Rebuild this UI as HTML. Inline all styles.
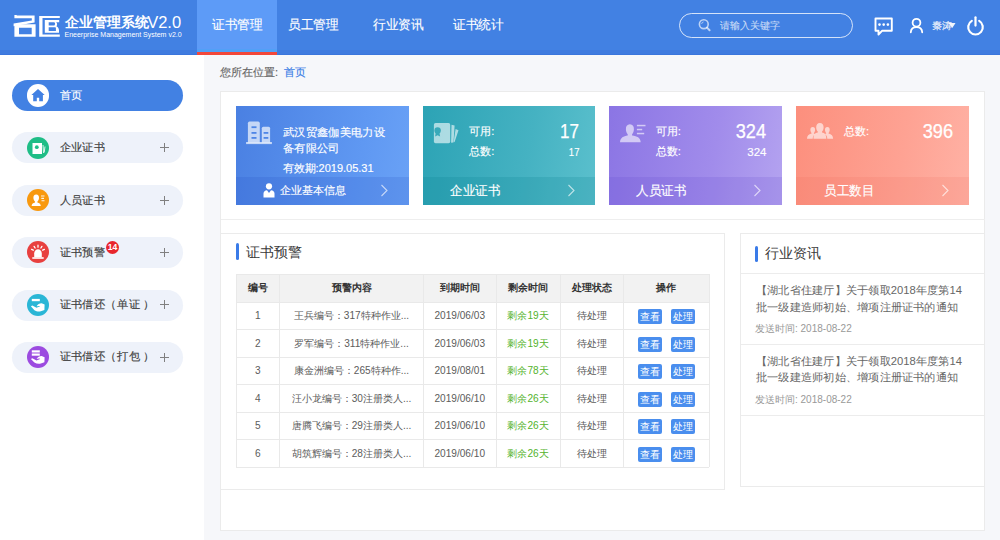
<!DOCTYPE html>
<html><head><meta charset="utf-8"><style>
*{margin:0;padding:0;box-sizing:border-box}
html,body{width:1000px;height:540px;overflow:hidden;background:#f6f7fa;font-family:"Liberation Sans",sans-serif;color:#333}
.sw{-webkit-text-stroke-width:0.15px}
.t{position:absolute;white-space:nowrap;line-height:1}
.r{position:absolute}
svg{position:absolute;overflow:visible}
.pill{position:absolute;left:12px;width:171px;height:31px;border-radius:16px;background:#eef2fa}
.pill .ic{position:absolute;border-radius:50%}
.pill .tx{position:absolute;left:48px;top:9px;font-size:11px;line-height:13px;color:#3d3d3d;white-space:nowrap;transform:scaleX(1.02);transform-origin:0 0}
.pill .pl{position:absolute;left:148px;top:10.6px;width:9px;height:9px}
.pill .pl:before{content:"";position:absolute;left:0;top:4px;width:9px;height:1px;background:#808080}
.pill .pl:after{content:"";position:absolute;left:4px;top:0;width:1px;height:9px;background:#808080}
.card{position:absolute;top:106px;width:172.5px;height:98.5px;overflow:hidden;color:#fff}
.card .bot{position:absolute;left:0;bottom:0;width:100%;height:27.5px}
.c{position:absolute;text-align:center;white-space:nowrap;font-size:10.1px;color:#5c5c5c}
.btn{position:absolute;width:24px;height:15.4px;line-height:15.4px;text-align:center;font-size:10px;color:#fff;background:#4a8eee;border-radius:2px}
.news{position:absolute;white-space:nowrap;font-size:11px;line-height:16.8px;color:#666;transform:scaleX(1.021);transform-origin:0 0}
</style></head><body>
<div class="r" style="left:0px;top:0px;width:1000px;height:55px;background:#4281e3;"></div>
<div class="r" style="left:0px;top:50px;width:1000px;height:5px;background:#3f7bdf;"></div>
<div class="r" style="left:0px;top:54.3px;width:1000px;height:0.7px;background:#3a75dc;"></div>
<div class="r" style="left:197px;top:0px;width:80px;height:49px;background:#5d9bf7;"></div>
<div class="r" style="left:197px;top:49px;width:80px;height:3px;background:#52a0f6;"></div>
<div class="r" style="left:197px;top:52px;width:80px;height:3px;background:#f2473a;"></div>
<svg style="left:0;top:0" width="70" height="50" viewBox="0 0 70 50"><g fill="#fff">
<path d="M14.4 15 L16.6 15 L16.8 15.6 L34.6 15.6 L34.6 22.6 L13.6 26.2 L13.6 23.6 L31.8 20.5 L31.8 18.2 L14.4 18.2 Z"/>
<path fill-rule="evenodd" d="M14.4 24.2 L35.6 24.2 L35.6 36.8 L14.4 36.8 Z M19 27.8 L31.7 27.8 L31.7 34.2 L19 34.2 Z"/>
<path d="M39.2 16.1 H59.8 V18.1 H42.5 V34.4 H59.8 V36.7 H39.2 Z"/>
<path fill-rule="evenodd" d="M44.8 20 H59.2 V22.2 H56.2 C57.5 23.5 57.3 25.2 56.4 26.2 C58.2 27 59 28.5 59 30.5 V32.8 H44.8 Z M48.7 22.2 V25.5 H54 C55.2 25.5 55.6 22.2 54 22.2 Z M48.7 27.2 V31.1 H55.9 V28.2 C55.9 27.6 55.5 27.2 55 27.2 Z"/>
</g></svg>
<div class="t" style="left:64.5px;top:15.6px;font-size:13.9px;color:#fff;font-weight:bold;-webkit-text-stroke-width:0">企业管理系统</div>
<div class="t" style="left:147.2px;top:13.6px;font-size:16.5px;color:#fff;">V2.0</div>
<div class="t" style="left:64.5px;top:31.4px;font-size:7.0px;color:#fff;-webkit-text-stroke-width:0">Eneerprise Management System v2.0</div>
<div class="t" style="left:211.5px;top:18.3px;font-size:13px;color:#fff;transform:scaleX(.975);transform-origin:0 0;-webkit-text-stroke-width:0.15px">证书管理</div>
<div class="t" style="left:288.3px;top:18.3px;font-size:13px;color:#fff;transform:scaleX(.975);transform-origin:0 0;-webkit-text-stroke-width:0.15px">员工管理</div>
<div class="t" style="left:372.6px;top:18.3px;font-size:13px;color:#fff;transform:scaleX(.975);transform-origin:0 0;-webkit-text-stroke-width:0.15px">行业资讯</div>
<div class="t" style="left:453.3px;top:18.3px;font-size:13px;color:#fff;transform:scaleX(.975);transform-origin:0 0;-webkit-text-stroke-width:0.15px">证书统计</div>
<div class="r" style="left:679px;top:12.5px;width:174px;height:25.5px;border:1.4px solid rgba(255,255,255,.78);border-radius:13px"></div>
<svg style="left:697px;top:18px" width="16" height="16" viewBox="0 0 16 16">
<circle cx="6.8" cy="6.2" r="4.4" fill="none" stroke="rgba(255,255,255,.65)" stroke-width="1.6"/>
<path d="M4.6 6 A2.3 2.3 0 0 1 6.6 3.9" fill="none" stroke="rgba(255,255,255,.5)" stroke-width="1"/>
<path d="M10 9.6 L12.6 12.3" stroke="rgba(255,255,255,.65)" stroke-width="2" stroke-linecap="round"/></svg>
<div class="t" style="left:720px;top:20.5px;font-size:10px;color:rgba(255,255,255,.68);-webkit-text-stroke-width:0.1px">请输入关键字</div>
<svg style="left:872px;top:15px" width="24" height="22" viewBox="0 0 24 22">
<path d="M3.5 3.5 H19.8 V15.8 H10 L6.5 19.5 V15.8 H3.5 Z" fill="none" stroke="#fff" stroke-width="1.9" stroke-linejoin="round"/>
<circle cx="7.5" cy="9.6" r="1.3" fill="#fff"/><circle cx="11.7" cy="9.6" r="1.3" fill="#fff"/><circle cx="15.9" cy="9.6" r="1.3" fill="#fff"/></svg>
<svg style="left:907px;top:15px" width="20" height="22" viewBox="0 0 20 22">
<circle cx="9.5" cy="7.7" r="3.9" fill="none" stroke="#fff" stroke-width="1.8"/>
<path d="M3.8 17.3 C4 13.9 6.3 12.2 9.5 12.2 C12.7 12.2 15 13.9 15.2 17.3" fill="none" stroke="#fff" stroke-width="1.8" stroke-linecap="round"/></svg>
<div class="t" style="left:932px;top:20.5px;font-size:10px;color:rgba(255,255,255,.85);-webkit-text-stroke-width:0.2px">秦涛</div>
<svg style="left:946.5px;top:22px" width="10" height="8" viewBox="0 0 10 8"><path d="M1.5 1 L8.5 1 L5.3 6 Z" fill="rgba(255,255,255,.92)"/></svg>
<svg style="left:964px;top:14px" width="24" height="24" viewBox="0 0 24 24">
<path d="M7.8 6.9 A7.3 7.3 0 1 0 15.2 6.9" fill="none" stroke="#fff" stroke-width="2.2" stroke-linecap="round"/>
<path d="M11.5 3.3 V11.6" stroke="#fff" stroke-width="2.2" stroke-linecap="round"/></svg>
<div class="r" style="left:0px;top:55px;width:204px;height:485px;background:#fff;"></div>

<div class="pill sw" style="top:80px;background:#4281e3">
  <div class="ic" style="background:#fff;left:14.5px;top:4px;width:22.6px;height:22.6px"></div>
  <svg style="left:18px;top:8px" width="16" height="16" viewBox="0 0 16 16">
    <path d="M8 1 L1.4 7 H3.2 V13.3 H6.8 V9.8 H9.2 V13.3 H12.9 V7 H14.7 Z" fill="#4281e3"/>
  </svg>
  <div class="tx" style="color:#fff;top:9px;left:48px">首页</div>
</div>
<div class="pill sw" style="top:132.4px">
  <div class="ic" style="background:#1fbd86;left:15px;top:4.3px;width:22px;height:22px"></div>
  <svg style="left:15px;top:4.3px" width="22" height="22" viewBox="0 0 22 22">
    <rect x="5.5" y="6" width="9.5" height="11" fill="#fff"/>
    <circle cx="9.8" cy="10.2" r="1.9" fill="#1fbd86"/>
    <path d="M16 8 L16.5 16 M18 9.5 L17.2 15.5" stroke="#fff" stroke-width="1" opacity=".85"/>
  </svg>
  <div class="tx">企业证书</div><div class="pl"></div>
</div>
<div class="pill sw" style="top:185px">
  <div class="ic" style="background:#f8990f;left:15px;top:4px;width:22px;height:22px"></div>
  <svg style="left:15px;top:4px" width="22" height="22" viewBox="0 0 22 22">
    <path d="M9.2 5.5 C11.2 5.5 12.1 7 12 9 C11.9 10.8 11 12.2 10.4 12.6 L10.4 13.5 C12.3 14 13.5 14.8 13.8 17 H4.6 C4.9 14.8 6.1 14 8 13.5 L8 12.6 C7.4 12.2 6.5 10.8 6.4 9 C6.3 7 7.2 5.5 9.2 5.5 Z" fill="#fff"/>
    <path d="M14 7 H17.5 M14.3 9.4 H17 M14.5 11.8 H17.5" stroke="#fff" stroke-width="1.1" opacity=".9"/>
  </svg>
  <div class="tx">人员证书</div><div class="pl"></div>
</div>
<div class="pill sw" style="top:237px">
  <div class="ic" style="background:#e8403f;left:15px;top:4px;width:22px;height:22px"></div>
  <svg style="left:15px;top:4px" width="22" height="22" viewBox="0 0 22 22">
    <path d="M7.2 16.2 V12.5 C7.2 10 9 8.3 11 8.3 C13 8.3 14.8 10 14.8 12.5 V16.2 Z" fill="#fff"/>
    <rect x="5.3" y="16.2" width="11.4" height="1.6" fill="#fff"/>
    <path d="M11 4.2 V6.2 M7.1 5.4 L8.1 7 M14.9 5.4 L13.9 7 M4.6 8.4 L6.3 9.2 M17.4 8.4 L15.7 9.2" stroke="#fff" stroke-width="1.3" stroke-linecap="round"/>
  </svg>
  <div class="tx">证书预警</div><div class="pl"></div>
  <div style="position:absolute;left:94.2px;top:3.5px;width:13.2px;height:13.2px;border-radius:50%;background:#e8262c"></div>
  <div class="t" style="left:95.8px;top:6.1px;font-size:8.6px;font-weight:bold;color:#fff;-webkit-text-stroke-width:0">14</div>
</div>
<div class="pill sw" style="top:289.5px">
  <div class="ic" style="background:#2ab6d6;left:15px;top:4px;width:22px;height:22px"></div>
  <svg style="left:15px;top:4px" width="22" height="22" viewBox="0 0 22 22">
    <rect x="4.8" y="4.9" width="8" height="2.3" fill="#fff"/>
    <path d="M3.9 12.3 L5.3 11.5 L9.5 13.8 C10.8 13.1 12 12.7 13.2 12.3 C12.1 11.6 10.6 12 9.6 12.3 C10.6 10.4 12.4 9.3 14.6 9.3 L17.6 10.6 L17.4 15.9 L13.8 17.3 C11.5 17.7 9.2 17.4 7.4 16.2 Z" fill="#fff"/>
  </svg>
  <div class="tx" style="top:8.3px">证书借还（<span style="margin-left:1.2px">单证</span><span style="margin-left:3px">）</span></div><div class="pl"></div>
</div>
<div class="pill sw" style="top:342px">
  <div class="ic" style="background:#9c4be0;left:15px;top:4px;width:22px;height:22px"></div>
  <svg style="left:15px;top:4px" width="22" height="22" viewBox="0 0 22 22">
    <rect x="4.8" y="4.3" width="8" height="2.2" fill="#fff"/>
    <rect x="4.8" y="7.5" width="8" height="2.2" fill="#fff"/>
    <path d="M3.9 13 L5.3 12.2 L9.5 14.4 C10.8 13.7 12 13.3 13.2 12.9 C12.1 12.2 10.6 12.6 9.6 12.9 C10.6 11 12.4 10 14.6 10 L17.6 11.2 L17.4 16.2 L13.8 17.5 C11.5 17.9 9.2 17.6 7.4 16.5 Z" fill="#fff"/>
  </svg>
  <div class="tx" style="top:8.3px">证书借还（<span style="margin-left:1.2px">打包</span><span style="margin-left:3px">）</span></div><div class="pl"></div>
</div>

<div class="t sw" style="left:220px;top:66.5px;font-size:11px;color:#666">您所在位置: <span style="color:#3a7ee6;margin-left:2.5px">首页</span></div>
<div class="r" style="left:220px;top:91px;width:765px;height:440px;background:#fff;border:1px solid #ebebeb"></div>
<div class="r" style="left:221px;top:219px;width:764px;height:1px;background:#eeeeee;"></div>
<!-- card 1 -->
<div class="card sw" style="left:236px;background:linear-gradient(100deg,#4a80e2 0%,#5f98f2 70%,#6aa2f6 100%)">
  <div class="bot" style="background:rgba(30,70,190,.15)"></div>
  <svg style="left:0;top:0" width="172" height="98" viewBox="236 106 172 98"><g fill="rgba(255,255,255,.68)">
<path d="M247.9 123.2 Q247.9 121.6 249.5 121.6 H258.2 Q259.8 121.6 259.8 123.2 V142.5 H247.9 Z"/>
<path d="M261.8 128.2 Q261.8 126.7 263.3 126.7 H268.6 Q270.1 126.7 270.1 128.2 V142.5 H261.8 Z"/>
<rect x="246.1" y="142" width="25.8" height="2.1"/></g>
<g fill="#4f86e6"><rect x="251.5" y="126.3" width="5" height="1.8"/><rect x="251.5" y="132" width="5" height="1.8"/><rect x="251.5" y="137" width="5" height="1.8"/>
<rect x="263.6" y="132" width="4.7" height="1.8"/><rect x="263.6" y="137" width="4.7" height="1.8"/></g></svg>
  <div class="t" style="left:46.5px;top:17.6px;font-size:11px;line-height:16.5px;transform:scaleX(1.03);transform-origin:0 0">武汉贸鑫伽美电力设<br>备有限公司</div>
  <div class="t" style="left:46.5px;top:57.3px;font-size:11px">有效期:2019.05.31</div>
  <svg style="left:26.6px;top:76.8px" width="12" height="15" viewBox="0 0 12 15">
    <circle cx="6" cy="3.3" r="3.1" fill="#fff"/>
    <path d="M0.5 14.5 V10.5 C0.5 8.5 2 7.3 4 7.2 L6 10 L8 7.2 C10 7.3 11.5 8.5 11.5 10.5 V14.5 Z" fill="#fff"/>
  </svg>
  <div class="t" style="left:44px;top:78.5px;font-size:11.2px">企业基本信息</div>
  <svg style="left:144px;top:78px" width="9" height="13" viewBox="0 0 9 13"><path d="M1.5 1 L7 6.5 L1.5 12" fill="none" stroke="rgba(255,255,255,.65)" stroke-width="1.1"/></svg>
</div>
<!-- card 2 -->
<div class="card sw" style="left:422.7px;background:linear-gradient(100deg,#2ca3b5 0%,#45b2c2 60%,#5bc0cd 100%)">
  <div class="bot" style="background:rgba(0,120,140,.18)"></div>
  <svg style="left:0;top:0" width="172" height="98" viewBox="422.7 106 172 98"><g fill="rgba(255,255,255,.6)">
<rect x="433.6" y="123.1" width="16.3" height="20.1" rx="1.6"/>
<path d="M451.2 124.8 L454.3 125.6 L453.2 142.6 L450.8 142.8 Z"/>
<path d="M455.3 129 L458.2 130.2 L454.2 142.2 L453.4 141.8 Z"/></g>
<circle cx="437.3" cy="130.4" r="3.2" fill="#38a9b9"/>
<path d="M435.5 132.5 L434.8 136.5 L437.3 135.2 L439.8 136.5 L439.1 132.5 Z" fill="#38a9b9"/></svg>
  <div class="t" style="left:46.5px;top:20px;font-size:11.2px">可用:</div>
  <div class="t" style="left:46.5px;top:40px;font-size:11.2px">总数:</div>
  <div class="t" style="right:16px;top:16px;font-size:19.8px;transform:scaleX(.86);transform-origin:100% 0;-webkit-text-stroke-width:0.25px">17</div>
  <div class="t" style="right:16px;top:41px;font-size:11.2px;transform:scaleX(.85);transform-origin:100% 0">17</div>
  <div class="t" style="left:27px;top:78px;font-size:13px;transform:scaleX(.967);transform-origin:0 0">企业证书</div>
  <svg style="left:144px;top:78px" width="9" height="13" viewBox="0 0 9 13"><path d="M1.5 1 L7 6.5 L1.5 12" fill="none" stroke="rgba(255,255,255,.65)" stroke-width="1.1"/></svg>
</div>
<!-- card 3 -->
<div class="card sw" style="left:609.3px;background:linear-gradient(100deg,#8b75e4 0%,#a18ceb 60%,#b4a3f0 100%)">
  <div class="bot" style="background:rgba(90,60,200,.15)"></div>
  <svg style="left:0;top:0" width="172" height="98" viewBox="609.3 106 172 98"><g fill="rgba(255,255,255,.6)">
<path d="M630.2 124.3 C633 124.3 634.4 126.4 634.2 129.5 C634 132 633.2 133.6 632.4 134.3 V135.6 C637.5 136.3 640.6 137.5 641 142.3 H620.3 C620.7 137.5 623.8 136.3 628 135.6 V134.3 C627.2 133.6 626.4 132 626.2 129.5 C626 126.4 627.4 124.3 630.2 124.3 Z"/>
<rect x="637.2" y="124.8" width="8.6" height="1.5"/><rect x="637.2" y="128.8" width="5.3" height="1.5"/><rect x="637.2" y="132.8" width="7.3" height="1.5"/></g></svg>
  <div class="t" style="left:46.5px;top:20px;font-size:11.2px">可用:</div>
  <div class="t" style="left:46.5px;top:40px;font-size:11.2px">总数:</div>
  <div class="t" style="right:15.3px;top:16px;font-size:19.8px;transform:scaleX(.92);transform-origin:100% 0;-webkit-text-stroke-width:0.25px">324</div>
  <div class="t" style="right:15.3px;top:40.7px;font-size:11.5px">324</div>
  <div class="t" style="left:27px;top:78px;font-size:13px;transform:scaleX(.967);transform-origin:0 0">人员证书</div>
  <svg style="left:144px;top:78px" width="9" height="13" viewBox="0 0 9 13"><path d="M1.5 1 L7 6.5 L1.5 12" fill="none" stroke="rgba(255,255,255,.65)" stroke-width="1.1"/></svg>
</div>
<!-- card 4 -->
<div class="card sw" style="left:796px;width:173px;background:linear-gradient(100deg,#fc8f7d 0%,#fea293 60%,#ffb2a5 100%)">
  <div class="bot" style="background:rgba(230,90,70,.12)"></div>
  <svg style="left:0;top:0" width="172" height="98" viewBox="796 106 172 98"><g fill="rgba(255,255,255,.6)">
<path d="M819.9 123.1 C822.4 123.1 823.7 124.9 823.6 127.6 C823.5 129.6 822.8 131 822 131.6 V132.4 C824.8 133 826.2 134.2 826.3 138.8 H813.5 C813.6 134.2 815 133 817.8 132.4 V131.6 C817 131 816.3 129.6 816.2 127.6 C816.1 124.9 817.4 123.1 819.9 123.1 Z"/>
<path d="M812.8 127 C814.4 127 815.2 128.2 815.1 130 C815 131.4 814.5 132.5 813.9 132.9 V133.5 C814.4 133.7 814.8 133.9 815.2 134.2 C813.6 135 812.8 136.4 812.7 138.8 H807 C807.1 135.5 808.5 134.3 811.6 133.5 V132.9 C811 132.5 810.5 131.4 810.4 130 C810.3 128.2 811.1 127 812.8 127 Z"/>
<path d="M827.3 127 C829 127 829.8 128.2 829.7 130 C829.6 131.4 829.1 132.5 828.5 132.9 V133.5 C831.6 134.3 833 135.5 833.1 138.8 H827.3 C827.2 136.4 826.5 135 824.9 134.2 C825.3 133.9 825.7 133.7 826.2 133.5 V132.9 C825.6 132.5 825.1 131.4 825 130 C824.9 128.2 825.7 127 827.3 127 Z"/></g></svg>
  <div class="t" style="left:48px;top:20px;font-size:11.2px">总数:</div>
  <div class="t" style="right:16px;top:16px;font-size:19.8px;transform:scaleX(.92);transform-origin:100% 0;-webkit-text-stroke-width:0.25px">396</div>
  <div class="t" style="left:28px;top:78px;font-size:13px;transform:scaleX(.967);transform-origin:0 0">员工数目</div>
  <svg style="left:145px;top:78px" width="9" height="13" viewBox="0 0 9 13"><path d="M1.5 1 L7 6.5 L1.5 12" fill="none" stroke="rgba(255,255,255,.65)" stroke-width="1.1"/></svg>
</div>

<div class="r" style="left:221px;top:233px;width:503.5px;height:256.5px;border:1px solid #ebebeb;border-left:none"></div>
<div class="r" style="left:236px;top:243.4px;width:3.3px;height:16.2px;background:#3a7be8;border-radius:2px"></div>
<div class="t" style="left:246px;top:244.5px;font-size:14px;color:#3a3a3a;">证书预警</div>
<div class="r" style="left:236px;top:274px;width:473px;height:28px;background:#f2f2f2;"></div>
<div class="r" style="left:235.5px;top:274px;width:1px;height:193.0px;background:#e9e9e9;"></div>
<div class="r" style="left:279.0px;top:274px;width:1px;height:193.0px;background:#e9e9e9;"></div>
<div class="r" style="left:423.0px;top:274px;width:1px;height:193.0px;background:#e9e9e9;"></div>
<div class="r" style="left:495.5px;top:274px;width:1px;height:193.0px;background:#e9e9e9;"></div>
<div class="r" style="left:559.5px;top:274px;width:1px;height:193.0px;background:#e9e9e9;"></div>
<div class="r" style="left:622.5px;top:274px;width:1px;height:193.0px;background:#e9e9e9;"></div>
<div class="r" style="left:708.5px;top:274px;width:1px;height:193.0px;background:#e9e9e9;"></div>
<div class="r" style="left:236px;top:273.5px;width:473px;height:1px;background:#e9e9e9;"></div>
<div class="r" style="left:236px;top:301.5px;width:473px;height:1px;background:#e9e9e9;"></div>
<div class="r" style="left:236px;top:329.0px;width:473px;height:1px;background:#e9e9e9;"></div>
<div class="r" style="left:236px;top:356.5px;width:473px;height:1px;background:#e9e9e9;"></div>
<div class="r" style="left:236px;top:384.0px;width:473px;height:1px;background:#e9e9e9;"></div>
<div class="r" style="left:236px;top:411.5px;width:473px;height:1px;background:#e9e9e9;"></div>
<div class="r" style="left:236px;top:439.0px;width:473px;height:1px;background:#e9e9e9;"></div>
<div class="r" style="left:236px;top:466.5px;width:473px;height:1px;background:#e9e9e9;"></div>
<div class="c" style="left:236px;top:274px;width:43.5px;height:28px;line-height:28px;font-weight:bold;color:#333;-webkit-text-stroke-width:0">编号</div>
<div class="c" style="left:279.5px;top:274px;width:144.0px;height:28px;line-height:28px;font-weight:bold;color:#333;-webkit-text-stroke-width:0">预警内容</div>
<div class="c" style="left:423.5px;top:274px;width:72.5px;height:28px;line-height:28px;font-weight:bold;color:#333;-webkit-text-stroke-width:0">到期时间</div>
<div class="c" style="left:496px;top:274px;width:64px;height:28px;line-height:28px;font-weight:bold;color:#333;-webkit-text-stroke-width:0">剩余时间</div>
<div class="c" style="left:560px;top:274px;width:63px;height:28px;line-height:28px;font-weight:bold;color:#333;-webkit-text-stroke-width:0">处理状态</div>
<div class="c" style="left:623px;top:274px;width:86px;height:28px;line-height:28px;font-weight:bold;color:#333;-webkit-text-stroke-width:0">操作</div>
<div class="c" style="left:236px;top:302.0px;width:43.5px;height:27.5px;line-height:27.5px;">1</div>
<div class="c" style="left:279.5px;top:302.0px;width:144.0px;height:27.5px;line-height:27.5px;">王兵编号：317特种作业...</div>
<div class="c" style="left:423.5px;top:302.0px;width:72.5px;height:27.5px;line-height:27.5px;">2019/06/03</div>
<div class="c" style="left:496px;top:302.0px;width:64px;height:27.5px;line-height:27.5px;color:#54b32c">剩余19天</div>
<div class="c" style="left:560px;top:302.0px;width:63px;height:27.5px;line-height:27.5px;">待处理</div>
<div class="btn" style="left:637.5px;top:309.0px">查看</div>
<div class="btn" style="left:671.3px;top:309.0px">处理</div>
<div class="c" style="left:236px;top:329.5px;width:43.5px;height:27.5px;line-height:27.5px;">2</div>
<div class="c" style="left:279.5px;top:329.5px;width:144.0px;height:27.5px;line-height:27.5px;">罗军编号：311特种作业...</div>
<div class="c" style="left:423.5px;top:329.5px;width:72.5px;height:27.5px;line-height:27.5px;">2019/06/03</div>
<div class="c" style="left:496px;top:329.5px;width:64px;height:27.5px;line-height:27.5px;color:#54b32c">剩余19天</div>
<div class="c" style="left:560px;top:329.5px;width:63px;height:27.5px;line-height:27.5px;">待处理</div>
<div class="btn" style="left:637.5px;top:336.5px">查看</div>
<div class="btn" style="left:671.3px;top:336.5px">处理</div>
<div class="c" style="left:236px;top:357.0px;width:43.5px;height:27.5px;line-height:27.5px;">3</div>
<div class="c" style="left:279.5px;top:357.0px;width:144.0px;height:27.5px;line-height:27.5px;">康金洲编号：265特种作...</div>
<div class="c" style="left:423.5px;top:357.0px;width:72.5px;height:27.5px;line-height:27.5px;">2019/08/01</div>
<div class="c" style="left:496px;top:357.0px;width:64px;height:27.5px;line-height:27.5px;color:#54b32c">剩余78天</div>
<div class="c" style="left:560px;top:357.0px;width:63px;height:27.5px;line-height:27.5px;">待处理</div>
<div class="btn" style="left:637.5px;top:364.0px">查看</div>
<div class="btn" style="left:671.3px;top:364.0px">处理</div>
<div class="c" style="left:236px;top:384.5px;width:43.5px;height:27.5px;line-height:27.5px;">4</div>
<div class="c" style="left:279.5px;top:384.5px;width:144.0px;height:27.5px;line-height:27.5px;">汪小龙编号：30注册类人...</div>
<div class="c" style="left:423.5px;top:384.5px;width:72.5px;height:27.5px;line-height:27.5px;">2019/06/10</div>
<div class="c" style="left:496px;top:384.5px;width:64px;height:27.5px;line-height:27.5px;color:#54b32c">剩余26天</div>
<div class="c" style="left:560px;top:384.5px;width:63px;height:27.5px;line-height:27.5px;">待处理</div>
<div class="btn" style="left:637.5px;top:391.5px">查看</div>
<div class="btn" style="left:671.3px;top:391.5px">处理</div>
<div class="c" style="left:236px;top:412.0px;width:43.5px;height:27.5px;line-height:27.5px;">5</div>
<div class="c" style="left:279.5px;top:412.0px;width:144.0px;height:27.5px;line-height:27.5px;">唐腾飞编号：29注册类人...</div>
<div class="c" style="left:423.5px;top:412.0px;width:72.5px;height:27.5px;line-height:27.5px;">2019/06/10</div>
<div class="c" style="left:496px;top:412.0px;width:64px;height:27.5px;line-height:27.5px;color:#54b32c">剩余26天</div>
<div class="c" style="left:560px;top:412.0px;width:63px;height:27.5px;line-height:27.5px;">待处理</div>
<div class="btn" style="left:637.5px;top:419.0px">查看</div>
<div class="btn" style="left:671.3px;top:419.0px">处理</div>
<div class="c" style="left:236px;top:439.5px;width:43.5px;height:27.5px;line-height:27.5px;">6</div>
<div class="c" style="left:279.5px;top:439.5px;width:144.0px;height:27.5px;line-height:27.5px;">胡筑辉编号：28注册类人...</div>
<div class="c" style="left:423.5px;top:439.5px;width:72.5px;height:27.5px;line-height:27.5px;">2019/06/10</div>
<div class="c" style="left:496px;top:439.5px;width:64px;height:27.5px;line-height:27.5px;color:#54b32c">剩余26天</div>
<div class="c" style="left:560px;top:439.5px;width:63px;height:27.5px;line-height:27.5px;">待处理</div>
<div class="btn" style="left:637.5px;top:446.5px">查看</div>
<div class="btn" style="left:671.3px;top:446.5px">处理</div>
<div class="r" style="left:740px;top:233px;width:245px;height:254px;border:1px solid #ebebeb"></div>
<div class="r" style="left:755px;top:245.5px;width:3.3px;height:16.3px;background:#3a7be8;border-radius:2px"></div>
<div class="t" style="left:765px;top:245.8px;font-size:14px;color:#3a3a3a;">行业资讯</div>
<div class="r" style="left:741px;top:273px;width:243px;height:1px;background:#ececec;"></div>
<div class="news" style="left:755.5px;top:282.0px">【湖北省住建厅】关于领取2018年度第14<br>批一级建造师初始、增项注册证书的通知</div>
<div class="t" style="left:755px;top:324.3px;font-size:10px;color:#999;">发送时间: 2018-08-22</div>
<div class="r" style="left:741px;top:344.0px;width:243px;height:1px;background:#ececec;"></div>
<div class="news" style="left:755.5px;top:352.5px">【湖北省住建厅】关于领取2018年度第14<br>批一级建造师初始、增项注册证书的通知</div>
<div class="t" style="left:755px;top:394.8px;font-size:10px;color:#999;">发送时间: 2018-08-22</div>
<div class="r" style="left:741px;top:414.5px;width:243px;height:1px;background:#ececec;"></div>
</body></html>
